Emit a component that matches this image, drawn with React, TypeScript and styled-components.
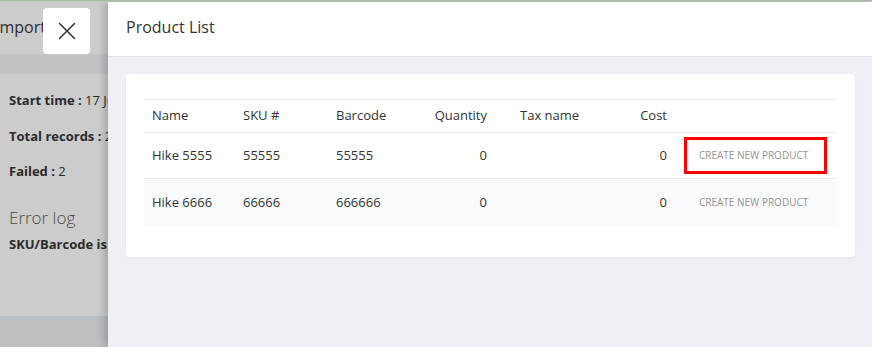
import React from "react";
import styled, { createGlobalStyle } from "styled-components";

const Global = createGlobalStyle`
  html, body { margin: 0; padding: 0; }
  body {
    font-family: "Open Sans", "Liberation Sans", sans-serif;
    background: #cccccc;
    width: 872px;
    height: 347px;
    overflow: hidden;
  }
  * { box-sizing: border-box; }
`;

const Screen = styled.div`
  position: relative;
  width: 872px;
  height: 347px;
  overflow: hidden;
  border-top: 1px solid #a3bea0;
`;

const Page = styled.div`
  display: flex;
  flex-direction: column;
  height: 346px;
  background: #cccccc;
  color: #2b2b2b;
`;

const PageHeader = styled.div`
  height: 54px;
  display: flex;
  align-items: center;
  font-size: 16px;
  color: #2e2e2e;
  border-bottom: 1px solid #c4c4c4;
`;

const PageTitle = styled.span`
  margin-left: -5px;
  margin-top: -2px;
`;

const SubBar = styled.div`
  height: 19px;
  background: #bfc3c6;
`;

const PageBody = styled.div`
  flex: 1;
  padding: 17px 9px 0;
  display: flex;
  flex-direction: column;
  font-size: 13px;
`;

const InfoLine = styled.div`
  height: 35.7px;
  line-height: 18px;
  white-space: nowrap;
`;

const Bold = styled.b`
  font-weight: 700;
`;

const ErrorTitle = styled.div`
  font-size: 17px;
  font-weight: 300;
  color: #4a4a4a;
  margin-top: 9px;
  line-height: 22px;
`;

const ErrorLine = styled.div`
  font-weight: 700;
  margin-top: 6px;
  white-space: nowrap;
`;

const PageFooter = styled.div`
  height: 31px;
  background: #bcc0c3;
`;

/* drawer */
const Drawer = styled.div`
  position: absolute;
  top: 1px;
  left: 108px;
  right: 0;
  bottom: 0;
  background: #edf0f5;
  box-shadow: -3px 0 8px rgba(0, 0, 0, 0.22);
  display: flex;
  flex-direction: column;
`;

const CloseButton = styled.button`
  position: absolute;
  left: -65px;
  top: 6px;
  width: 47px;
  height: 46px;
  border: none;
  border-radius: 4px;
  background: #ffffff;
  display: flex;
  align-items: center;
  justify-content: center;
  padding: 0;
  cursor: pointer;
`;

const DrawerHeader = styled.div`
  height: 55px;
  flex-shrink: 0;
  background: #ffffff;
  border-bottom: 1px solid #e2e4e8;
  display: flex;
  align-items: center;
  padding-left: 18px;
  padding-bottom: 4px;
  font-size: 16px;
  color: #333333;
`;

const DrawerBody = styled.div`
  padding: 17px 17px 0 18px;
`;

const Card = styled.div`
  background: #ffffff;
  border-radius: 3px;
  box-shadow: 0 1px 3px rgba(0, 0, 0, 0.06);
  padding: 25px 18px 32px;
`;

const Table = styled.div`
  display: grid;
  grid-template-columns: 91px 93px 80px 87px 92px 88px 1fr;
  border-top: 1px solid #e6e9ee;
  font-size: 13px;
  color: #333333;
`;

const Row = styled.div<{ $striped?: boolean; $head?: boolean }>`
  display: contents;
  & > div {
    height: ${(p) => (p.$head ? "33px" : "46px")};
    padding-bottom: ${(p) => (p.$head ? "2px" : "1px")};
    background: ${(p) => (p.$striped ? "#f9fafc" : "#ffffff")};
    border-bottom: ${(p) => (p.$striped ? "none" : "1px solid #e6e9ee")};
  }
`;

const Cell = styled.div<{ $align?: "left" | "right"; $pl?: number }>`
  display: flex;
  align-items: center;
  justify-content: ${(p) => (p.$align === "right" ? "flex-end" : "flex-start")};
  padding-left: ${(p) => p.$pl ?? 8}px;
  padding-right: 8px;
  white-space: nowrap;
`;

const ActionButton = styled.button<{ $highlight?: boolean }>`
  font-family: "Open Sans", "Liberation Sans", sans-serif;
  font-size: 10px;
  color: #929292;
  text-transform: uppercase;
  background: transparent;
  border: 3px solid ${(p) => (p.$highlight ? "#ff0000" : "transparent")};
  height: 37px;
  padding: 0 16px 0 12px;
  margin-left: 9px;
  white-space: nowrap;
  cursor: pointer;
`;

type Product = { name: string; sku: string; barcode: string; qty: number; tax: string; cost: number };

const products: Product[] = [
  { name: "Hike 5555", sku: "55555", barcode: "55555", qty: 0, tax: "", cost: 0 },
  { name: "Hike 6666", sku: "66666", barcode: "666666", qty: 0, tax: "", cost: 0 },
];

const CloseIcon = () => (
  <svg width="18" height="18" viewBox="0 0 18 18" fill="none">
    <path d="M1.5 1.5 L16.5 16.5 M16.5 1.5 L1.5 16.5" stroke="#333" strokeWidth="1.5" strokeLinecap="round" />
  </svg>
);

export default function App() {
  return (
    <>
      <Global />
      <Screen>
        <Page>
          <PageHeader>
            <PageTitle>Import</PageTitle>
          </PageHeader>
          <SubBar />
          <PageBody>
            <InfoLine>
              <Bold>Start time :</Bold> 17 Jun 2021
            </InfoLine>
            <InfoLine>
              <Bold>Total records :</Bold> 2
            </InfoLine>
            <InfoLine>
              <Bold>Failed :</Bold> 2
            </InfoLine>
            <ErrorTitle>Error log</ErrorTitle>
            <ErrorLine>SKU/Barcode is not found</ErrorLine>
          </PageBody>
          <PageFooter />
        </Page>
        <Drawer>
          <CloseButton aria-label="Close">
            <CloseIcon />
          </CloseButton>
          <DrawerHeader>Product List</DrawerHeader>
          <DrawerBody>
            <Card>
              <Table>
                <Row $head>
                  <Cell>Name</Cell>
                  <Cell>SKU #</Cell>
                  <Cell>Barcode</Cell>
                  <Cell $align="right">Quantity</Cell>
                  <Cell $pl={25}>Tax name</Cell>
                  <Cell $align="right">Cost</Cell>
                  <Cell />
                </Row>
                {products.map((p, i) => (
                  <Row key={p.name} $striped={i % 2 === 1}>
                    <Cell>{p.name}</Cell>
                    <Cell>{p.sku}</Cell>
                    <Cell>{p.barcode}</Cell>
                    <Cell $align="right">{p.qty}</Cell>
                    <Cell $pl={25}>{p.tax}</Cell>
                    <Cell $align="right">{p.cost}</Cell>
                    <Cell $pl={0}>
                      <ActionButton $highlight={i === 0}>Create new product</ActionButton>
                    </Cell>
                  </Row>
                ))}
              </Table>
            </Card>
          </DrawerBody>
        </Drawer>
      </Screen>
    </>
  );
}
